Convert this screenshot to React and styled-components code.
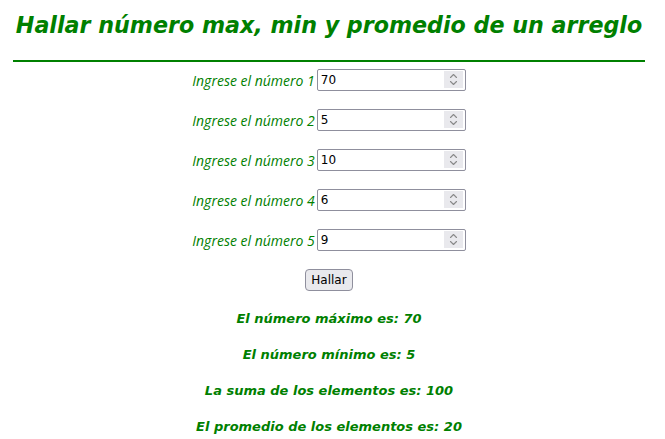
import React from "react";
import styled, { createGlobalStyle } from "styled-components";

const Global = createGlobalStyle`
  html, body { margin: 0; padding: 0; background: #fff; }
  body { font-family: "DejaVu Sans", sans-serif; }
`;

const Page = styled.div`
  padding: 0 20px 0 13px;
  display: flex;
  flex-direction: column;
  align-items: center;
`;

const Title = styled.h1`
  margin: 12px 0 0;
  height: 41px;
  font-family: "DejaVu Sans", sans-serif;
  font-style: italic;
  font-weight: bold;
  font-size: 22.2px;
  color: #008000;
  white-space: nowrap;
`;

const Rule = styled.div`
  align-self: stretch;
  height: 2px;
  background: #008000;
  margin-top: 7px;
`;

const Form = styled.div`
  display: flex;
  flex-direction: column;
  align-items: center;
  gap: 18px;
  margin-top: 7px;
`;

const Row = styled.label`
  display: flex;
  align-items: center;
  gap: 2px;
`;

const Label = styled.span`
  font-family: "Open Sans", sans-serif;
  font-style: italic;
  font-size: 14px;
  color: #008000;
`;

const InputWrap = styled.span`
  position: relative;
  display: inline-flex;
`;

const NumberInput = styled.input`
  box-sizing: border-box;
  width: 149px;
  height: 22px;
  border: 1px solid #8f8f9d;
  border-radius: 2px;
  padding: 0 3px;
  font-family: "DejaVu Sans", sans-serif;
  font-size: 12px;
  color: #000;
  -moz-appearance: textfield;
  &::-webkit-inner-spin-button,
  &::-webkit-outer-spin-button {
    -webkit-appearance: none;
    margin: 0;
  }
`;

const Spinner = styled.span`
  position: absolute;
  right: 3px;
  top: 2px;
  width: 19px;
  height: 17px;
  background: #e9e9ed;
  display: flex;
  align-items: center;
  justify-content: center;
  pointer-events: none;
`;

const Button = styled.button`
  box-sizing: border-box;
  height: 22px;
  padding: 0 5px;
  border: 1px solid #8f8f9d;
  border-radius: 4px;
  background: #e9e9ed;
  font-family: "DejaVu Sans", sans-serif;
  font-size: 12px;
  color: #000;
`;

const Results = styled.div`
  display: flex;
  flex-direction: column;
  align-items: center;
  gap: 17px;
  margin-top: 18px;
`;

const Result = styled.p`
  margin: 0;
  height: 19px;
  font-family: "DejaVu Sans", sans-serif;
  font-style: italic;
  font-weight: bold;
  font-size: 13px;
  line-height: 19px;
  color: #008000;
  white-space: nowrap;
`;

const SpinIcon = () => (
  <svg width="9" height="13" viewBox="0 0 9 13" fill="none" stroke="#8a8a8a" strokeWidth="1.1" strokeLinecap="round" strokeLinejoin="round">
    <path d="M1.5 4.5 L4.5 1.5 L7.5 4.5" />
    <path d="M1.5 8.5 L4.5 11.5 L7.5 8.5" />
  </svg>
);

const values = [70, 5, 10, 6, 9];

export default function App() {
  return (
    <>
      <Global />
      <Page>
        <Title>Hallar número max, min y promedio de un arreglo</Title>
        <Rule />
        <Form>
          {values.map((v, i) => (
            <Row key={i}>
              <Label>Ingrese el número {i + 1}</Label>
              <InputWrap>
                <NumberInput type="number" defaultValue={v} />
                <Spinner>
                  <SpinIcon />
                </Spinner>
              </InputWrap>
            </Row>
          ))}
          <Button>Hallar</Button>
        </Form>
        <Results>
          <Result>El número máximo es: 70</Result>
          <Result>El número mínimo es: 5</Result>
          <Result>La suma de los elementos es: 100</Result>
          <Result>El promedio de los elementos es: 20</Result>
        </Results>
      </Page>
    </>
  );
}
